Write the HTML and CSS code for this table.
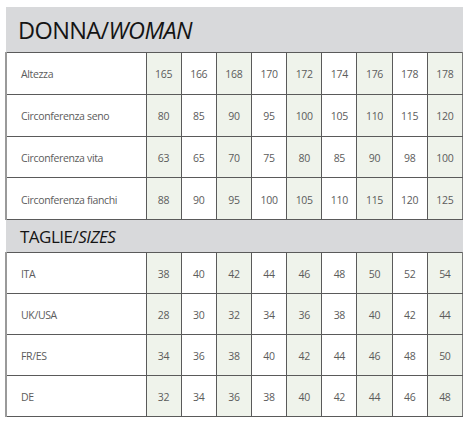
FILE: index.html
```
<!DOCTYPE html>
<html>
<head>
<meta charset="utf-8">
<link rel="stylesheet" href="styles.css">
</head>
<body>
<table class="sizes">
  <colgroup>
    <col class="c-label">
    <col class="c-num"><col class="c-num"><col class="c-num"><col class="c-num"><col class="c-num"><col class="c-num"><col class="c-num"><col class="c-num"><col class="c-num">
  </colgroup>
  <tr class="head head-main"><th colspan="10">DONNA/<em>WOMAN</em></th></tr>
  <tr class="row r1">
    <td class="label">Altezza</td>
    <td class="g">165</td><td>166</td><td class="g">168</td><td>170</td><td class="g">172</td><td>174</td><td class="g">176</td><td>178</td><td class="g">178</td>
  </tr>
  <tr class="row r1">
    <td class="label">Circonferenza seno</td>
    <td class="g">80</td><td>85</td><td class="g">90</td><td>95</td><td class="g">100</td><td>105</td><td class="g">110</td><td>115</td><td class="g">120</td>
  </tr>
  <tr class="row r1">
    <td class="label">Circonferenza vita</td>
    <td class="g">63</td><td>65</td><td class="g">70</td><td>75</td><td class="g">80</td><td>85</td><td class="g">90</td><td>98</td><td class="g">100</td>
  </tr>
  <tr class="row r1">
    <td class="label">Circonferenza fianchi</td>
    <td class="g">88</td><td>90</td><td class="g">95</td><td>100</td><td class="g">105</td><td>110</td><td class="g">115</td><td>120</td><td class="g">125</td>
  </tr>
  <tr class="head head-sub"><th colspan="10">TAGLIE/<em>SIZES</em></th></tr>
  <tr class="row r2">
    <td class="label">ITA</td>
    <td class="g">38</td><td>40</td><td class="g">42</td><td>44</td><td class="g">46</td><td>48</td><td class="g">50</td><td>52</td><td class="g">54</td>
  </tr>
  <tr class="row r2">
    <td class="label">UK/USA</td>
    <td class="g">28</td><td>30</td><td class="g">32</td><td>34</td><td class="g">36</td><td>38</td><td class="g">40</td><td>42</td><td class="g">44</td>
  </tr>
  <tr class="row r2">
    <td class="label">FR/ES</td>
    <td class="g">34</td><td>36</td><td class="g">38</td><td>40</td><td class="g">42</td><td>44</td><td class="g">46</td><td>48</td><td class="g">50</td>
  </tr>
  <tr class="row r2">
    <td class="label">DE</td>
    <td class="g">32</td><td>34</td><td class="g">36</td><td>38</td><td class="g">40</td><td>42</td><td class="g">44</td><td>46</td><td class="g">48</td>
  </tr>
</table>
</body>
</html>
```
FILE: styles.css
```
html, body {
  margin: 0;
  padding: 0;
  background: #ffffff;
}
body {
  font-family: "Open Sans", "Noto Sans", sans-serif;
}
.sizes {
  border-collapse: collapse;
  table-layout: fixed;
  width: 458px;
  margin: 7px 0 0 5px;
}
.c-label { width: 140px; }
.head th {
  background: #d8d9db;
  color: #141414;
  font-weight: 400;
  text-align: left;
  padding: 0 0 0 12px;
  border: none;
}
.head em { font-style: italic; }
.head-main th {
  height: 44px;
  font-size: 23.5px;
  letter-spacing: -0.6px;
  padding-top: 1px;
}
.head-sub th {
  height: 32px;
  font-size: 17px;
  letter-spacing: -0.5px;
  padding-left: 14px;
}
.row td {
  border: 1px solid #5a5a5a;
  color: #5c5c5c;
  font-size: 10.5px;
  text-align: center;
  padding: 2px 0 0;
  letter-spacing: -0.3px;
}
.row td.label { letter-spacing: -0.35px; }
.r1 td { height: 38.75px; }
.r2 td { height: 38px; }
.row td.label {
  text-align: left;
  padding-left: 14px;
  border-left: 2px solid #9a9a9a;
}
.row td.g { background: #eff3eb; }
.row td:last-child { border-right: 1px solid #7a7a7a; }
```
